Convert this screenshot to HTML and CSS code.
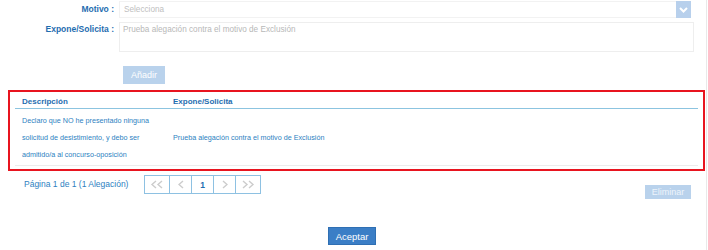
FILE: index.html
```html
<!DOCTYPE html>
<html lang="es">

<head>
  <meta charset="UTF-8">
  <meta name="viewport" content="width=device-width, initial-scale=1.0">
  <title>Alegaciones</title>
  <link rel="stylesheet" href="styles.css">
</head>

<body>
  <div class="page">
    <form class="alegacion">
      <label class="row" for="motivo">
        <span class="label">Motivo :</span>
        <span class="select">
          <span class="select-text">Selecciona</span>
          <span class="select-arrow">
            <svg width="9" height="6" viewBox="0 0 9 6"><polyline points="1,1 4.5,4.5 8,1" fill="none" stroke="#fff" stroke-width="2"/></svg>
          </span>
        </span>
      </label>
      <label class="row" for="expone">
        <span class="label label-top">Expone/Solicita :</span>
        <textarea id="expone" class="textarea" placeholder="Prueba alegación contra el motivo de Exclusión"></textarea>
      </label>
      <div class="actions">
        <button type="button" class="btn btn-disabled">Añadir</button>
      </div>
    </form>

    <div class="grid-box">
      <table class="grid">
        <thead>
          <tr>
            <th class="col-desc">Descripción</th>
            <th>Expone/Solicita</th>
          </tr>
        </thead>
        <tbody>
          <tr>
            <td class="col-desc">Declaro que NO he presentado ninguna solicitud de desistimiento, y debo ser admitido/a al concurso-oposición</td>
            <td>Prueba alegación contra el motivo de Exclusión</td>
          </tr>
        </tbody>
      </table>
    </div>

    <div class="pager-row">
      <span class="pager-info">Página 1 de 1 (1 Alegación)</span>
      <div class="pager">
        <span class="pg pg-wide"><svg width="14" height="9" viewBox="0 0 14 9"><polyline points="6,1 2,4.5 6,8" fill="none" stroke="#ccc" stroke-width="1.4"/><polyline points="12,1 8,4.5 12,8" fill="none" stroke="#ccc" stroke-width="1.4"/></svg></span>
        <span class="pg"><svg width="6" height="9" viewBox="0 0 6 9"><polyline points="5,1 1,4.5 5,8" fill="none" stroke="#ccc" stroke-width="1.4"/></svg></span>
        <span class="pg pg-current">1</span>
        <span class="pg"><svg width="6" height="9" viewBox="0 0 6 9"><polyline points="1,1 5,4.5 1,8" fill="none" stroke="#ccc" stroke-width="1.4"/></svg></span>
        <span class="pg pg-wide"><svg width="14" height="9" viewBox="0 0 14 9"><polyline points="2,1 6,4.5 2,8" fill="none" stroke="#ccc" stroke-width="1.4"/><polyline points="8,1 12,4.5 8,8" fill="none" stroke="#ccc" stroke-width="1.4"/></svg></span>
      </div>
      <button type="button" class="btn btn-disabled btn-eliminar">Eliminar</button>
    </div>

    <div class="footer">
      <button type="button" class="btn btn-primary">Aceptar</button>
    </div>
  </div>
</body>

</html>
```

FILE: styles.css
```css
html,
body {
  margin: 0;
  background: #fff;
  font-family: "Liberation Sans", Arial, sans-serif;
}

.page {
  width: 707px;
  height: 250px;
  border-right: 1px solid #e9e9e9;
  box-sizing: border-box;
  overflow: hidden;
}

/* form */
.alegacion {
  padding-top: 1px;
}

.row {
  display: flex;
  align-items: flex-start;
  margin-bottom: 4px;
}

.label {
  width: 114px;
  text-align: right;
  color: #1f6db0;
  font-weight: bold;
  font-size: 8.5px;
  line-height: 17px;
  margin-right: 5px;
}

.label-top {
  line-height: 15px;
}

.select {
  display: flex;
  justify-content: space-between;
  width: 572px;
  height: 17px;
  border: 1px solid #f2f2f2;
  box-sizing: border-box;
  padding-left: 4px;
}

.select-text {
  color: #c0c0c0;
  font-size: 8.2px;
  line-height: 15px;
}

.select-arrow {
  display: flex;
  align-items: center;
  justify-content: center;
  width: 15px;
  margin: -1px -1px -1px 0;
  background: #b8d0ec;
}

.textarea {
  width: 575px;
  height: 30px;
  border: 1px solid #eeeeee;
  box-sizing: border-box;
  padding: 2px 3px;
  margin: 0;
  resize: none;
  font-family: "Liberation Sans", Arial, sans-serif;
  font-size: 8.2px;
}

.textarea::placeholder {
  color: #b8b8b8;
}

.actions {
  padding: 8px 0 0 123px;
  height: 26px;
}

/* buttons */
.btn {
  border: none;
  font-family: "Liberation Sans", Arial, sans-serif;
  font-size: 9px;
  padding: 0;
  color: #fff;
}

.btn-disabled {
  width: 42px;
  height: 18px;
  background: #b9d2ec;
}

.btn-eliminar {
  width: 46px;
  height: 14px;
  margin-top: 10px;
  margin-left: auto;
  margin-right: 15px;
  color: #eef4fb;
}

.btn-primary {
  width: 48px;
  height: 18px;
  background: #3b7ec6;
  border: 1px solid #2f6fb3;
  font-size: 9.5px;
}

/* grid */
.grid-box {
  margin: 0 1px 0 8px;
  border: 2px solid #e8141f;
  padding: 1px 5px 3px 5px;
}

.grid {
  width: 100%;
  table-layout: fixed;
  border-collapse: collapse;
  font-size: 7.2px;
  color: #2d7fc1;
}

.grid th {
  text-align: left;
  color: #1f6db0;
  font-size: 8px;
  padding: 2px 7px 0;
  height: 13px;
  border-bottom: 1px solid #8cc4e0;
}

.grid td {
  padding: 3px 7px 2px;
  line-height: 17px;
  border-bottom: 1px solid #ececec;
}

.grid .col-desc {
  width: 137px;
}

/* pager */
.pager-row {
  display: flex;
  align-items: flex-start;
  padding: 4px 0 0 24px;
  height: 46px;
  box-sizing: border-box;
}

.pager-info {
  color: #2d7fc1;
  font-size: 8.5px;
  line-height: 19px;
  width: 120px;
}

.pager {
  display: flex;
  border: 1px solid #8ec1e2;
}

.pg {
  display: flex;
  align-items: center;
  justify-content: center;
  width: 21px;
  height: 17px;
  border-left: 1px solid #8ec1e2;
}

.pg:first-child {
  border-left: none;
}

.pg-wide {
  width: 24px;
}

.pg-current {
  color: #1f6db0;
  font-size: 8.5px;
  font-weight: bold;
}

.footer {
  display: flex;
  justify-content: center;
  padding: 10px 2px 0 0;
}
```
